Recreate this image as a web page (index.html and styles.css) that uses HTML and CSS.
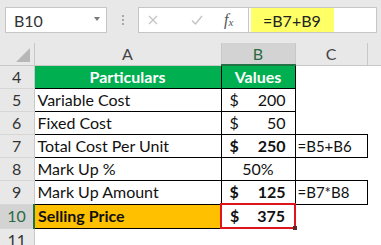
FILE: index.html
```html
<!DOCTYPE html>
<html>
<head>
<meta charset="utf-8">
<link rel="stylesheet" href="styles.css">
</head>
<body>
<div class="toolbar">
  <div class="namebox"><span>B10</span><span class="caret"></span></div>
  <div class="dots"><i></i><i></i><i></i></div>
  <div class="fbuttons">
    <svg class="ic-x" width="10" height="10" viewBox="0 0 10 10"><path d="M1 1L9 9M9 1L1 9" stroke="#c4c4c4" stroke-width="1.3" fill="none"/></svg>
    <svg class="ic-check" width="12" height="10" viewBox="0 0 12 10"><path d="M1 5.5L4.5 9L11 1" stroke="#c4c4c4" stroke-width="1.4" fill="none"/></svg>
    <span class="fx">f<sub>x</sub></span>
  </div>
  <div class="finput"><span class="ftext">=B7+B9</span></div>
</div>
<table class="sheet">
  <colgroup>
    <col class="c-rh"><col class="c-a"><col class="c-b"><col class="c-c"><col class="c-d">
  </colgroup>
  <tr class="hdr">
    <th class="corner"><span class="tri"></span></th>
    <th>A</th>
    <th class="sel-col">B</th>
    <th>C</th>
    <th class="last"></th>
  </tr>
  <tr>
    <th class="rh">4</th>
    <td class="green bx">Particulars</td>
    <td class="green bx">Values</td>
    <td></td><td></td>
  </tr>
  <tr>
    <th class="rh">5</th>
    <td class="bx">Variable Cost</td>
    <td class="bx"><div class="money"><span>$</span><span>200</span></div></td>
    <td></td><td></td>
  </tr>
  <tr>
    <th class="rh">6</th>
    <td class="bx">Fixed Cost</td>
    <td class="bx"><div class="money"><span>$</span><span>50</span></div></td>
    <td></td><td></td>
  </tr>
  <tr>
    <th class="rh">7</th>
    <td class="bx">Total Cost Per Unit</td>
    <td class="bx b"><div class="money"><span>$</span><span>250</span></div></td>
    <td class="bx f">=B5+B6</td><td></td>
  </tr>
  <tr>
    <th class="rh">8</th>
    <td class="bx">Mark Up %</td>
    <td class="bx center">50%</td>
    <td></td><td></td>
  </tr>
  <tr>
    <th class="rh">9</th>
    <td class="bx">Mark Up Amount</td>
    <td class="bx b"><div class="money"><span>$</span><span>125</span></div></td>
    <td class="bx f">=B7*B8</td><td></td>
  </tr>
  <tr>
    <th class="rh sel-row">10</th>
    <td class="bx orange b">Selling Price</td>
    <td class="red b"><div class="money"><span>$</span><span>375</span></div><span class="handle"></span></td>
    <td></td><td></td>
  </tr>
  <tr>
    <th class="rh">11</th>
    <td></td><td></td><td></td><td></td>
  </tr>
</table>
</body>
</html>
```
FILE: styles.css
```css
html, body {
  margin: 0;
  padding: 0;
  background: #ffffff;
  width: 381px;
  height: 245px;
  overflow: hidden;
  font-family: Lato, "Liberation Sans", Arial, sans-serif;
}
.toolbar {
  display: flex;
  align-items: flex-start;
  height: 43px;
  background: #e8e8e8;
  padding-top: 7px;
  box-sizing: border-box;
}
.namebox {
  margin-left: 5px;
  width: 102px;
  height: 26px;
  box-sizing: border-box;
  background: #fff;
  border: 1px solid #c6c6c6;
  display: flex;
  align-items: center;
  justify-content: space-between;
  padding: 0 6px 0 8px;
  font-size: 16px;
  color: #333;
}
.caret {
  width: 0;
  height: 0;
  border-left: 3.5px solid transparent;
  border-right: 3.5px solid transparent;
  border-top: 4px solid #7a7a7a;
  margin-top: -2px;
}
.dots {
  width: 31px;
  height: 26px;
  display: flex;
  flex-direction: column;
  align-items: center;
  justify-content: center;
  gap: 2px;
}
.dots i {
  display: block;
  width: 2px;
  height: 2px;
  background: #a8a8a8;
}
.fbuttons {
  width: 110px;
  height: 26px;
  box-sizing: border-box;
  background: #fff;
  border: 1px solid #c6c6c6;
  border-right: none;
  display: flex;
  align-items: center;
}
.ic-x { margin-left: 9px; }
.ic-check { margin-left: 33px; }
.fx {
  margin-left: 21px;
  font-family: "Liberation Serif", serif;
  font-style: italic;
  font-size: 16px;
  color: #555;
  line-height: 1;
}
.fx sub { font-size: 11px; vertical-align: -1px; }
.finput {
  flex: 1;
  height: 26px;
  box-sizing: border-box;
  background: #fff;
  border: 1px solid #c6c6c6;
  margin-right: 4px;
  padding-left: 2px;
  display: flex;
  align-items: center;
}
.ftext {
  background: #ffff66;
  height: 24px;
  width: 83px;
  box-sizing: border-box;
  padding-left: 12px;
  display: flex;
  align-items: center;
  font-size: 16px;
  color: #222;
}
.sheet {
  border-collapse: collapse;
  table-layout: fixed;
  width: 395px;
  font-size: 16px;
  color: #111;
}
.c-rh { width: 34px; }
.c-a { width: 187px; }
.c-b { width: 74px; }
.c-c { width: 72px; }
.c-d { width: 28px; }
.sheet th, .sheet td {
  padding: 0;
  height: 22px;
  line-height: 22px;
  white-space: nowrap;
  overflow: hidden;
}
.hdr th {
  background: #e8e8e8;
  font-weight: normal;
  color: #444;
  border-right: 1px solid #c8c8c8;
  border-bottom: 1px solid #c8c8c8;
  height: 21px;
  line-height: 21px;
  font-size: 16px;
}
.hdr th.last { border-right: none; }
.hdr th.corner {
  position: relative;
  border-right: 1px solid #c8c8c8;
}
.tri {
  position: absolute;
  right: 4px;
  bottom: 3px;
  width: 0;
  height: 0;
  border-left: 14px solid transparent;
  border-bottom: 14px solid #b7b7b7;
}
.hdr th.sel-col {
  background: #d3d3d3;
  color: #2b6a44;
  border-bottom: 2px solid #217346;
}
.rh {
  background: #e8e8e8;
  font-weight: normal;
  color: #333;
  border-right: 1px solid #c8c8c8;
  border-bottom: 1px solid #d6d6d6;
  text-align: center;
}
.rh.sel-row {
  background: #d3d3d3;
  color: #2b6a44;
  border-right: 2px solid #217346;
}
.sheet td { padding-left: 3px; }
.bx { border: 1px solid #000; }
.green {
  background: #00b050;
  color: #fff;
  font-weight: bold;
  text-align: center;
  padding-left: 0 !important;
}
.orange { background: #ffc000; }
.b { font-weight: bold; }
.center { text-align: center; padding-left: 0 !important; }
.f { font-size: 15px; padding-left: 2px !important; }
.money {
  display: flex;
  justify-content: space-between;
  padding: 0 9px 0 5px;
}
.red {
  border: 2px solid #e0141c;
  position: relative;
  overflow: visible !important;
}
.handle {
  position: absolute;
  right: -3px;
  bottom: -3px;
  width: 4px;
  height: 4px;
  background: #5a2a2a;
}
```
